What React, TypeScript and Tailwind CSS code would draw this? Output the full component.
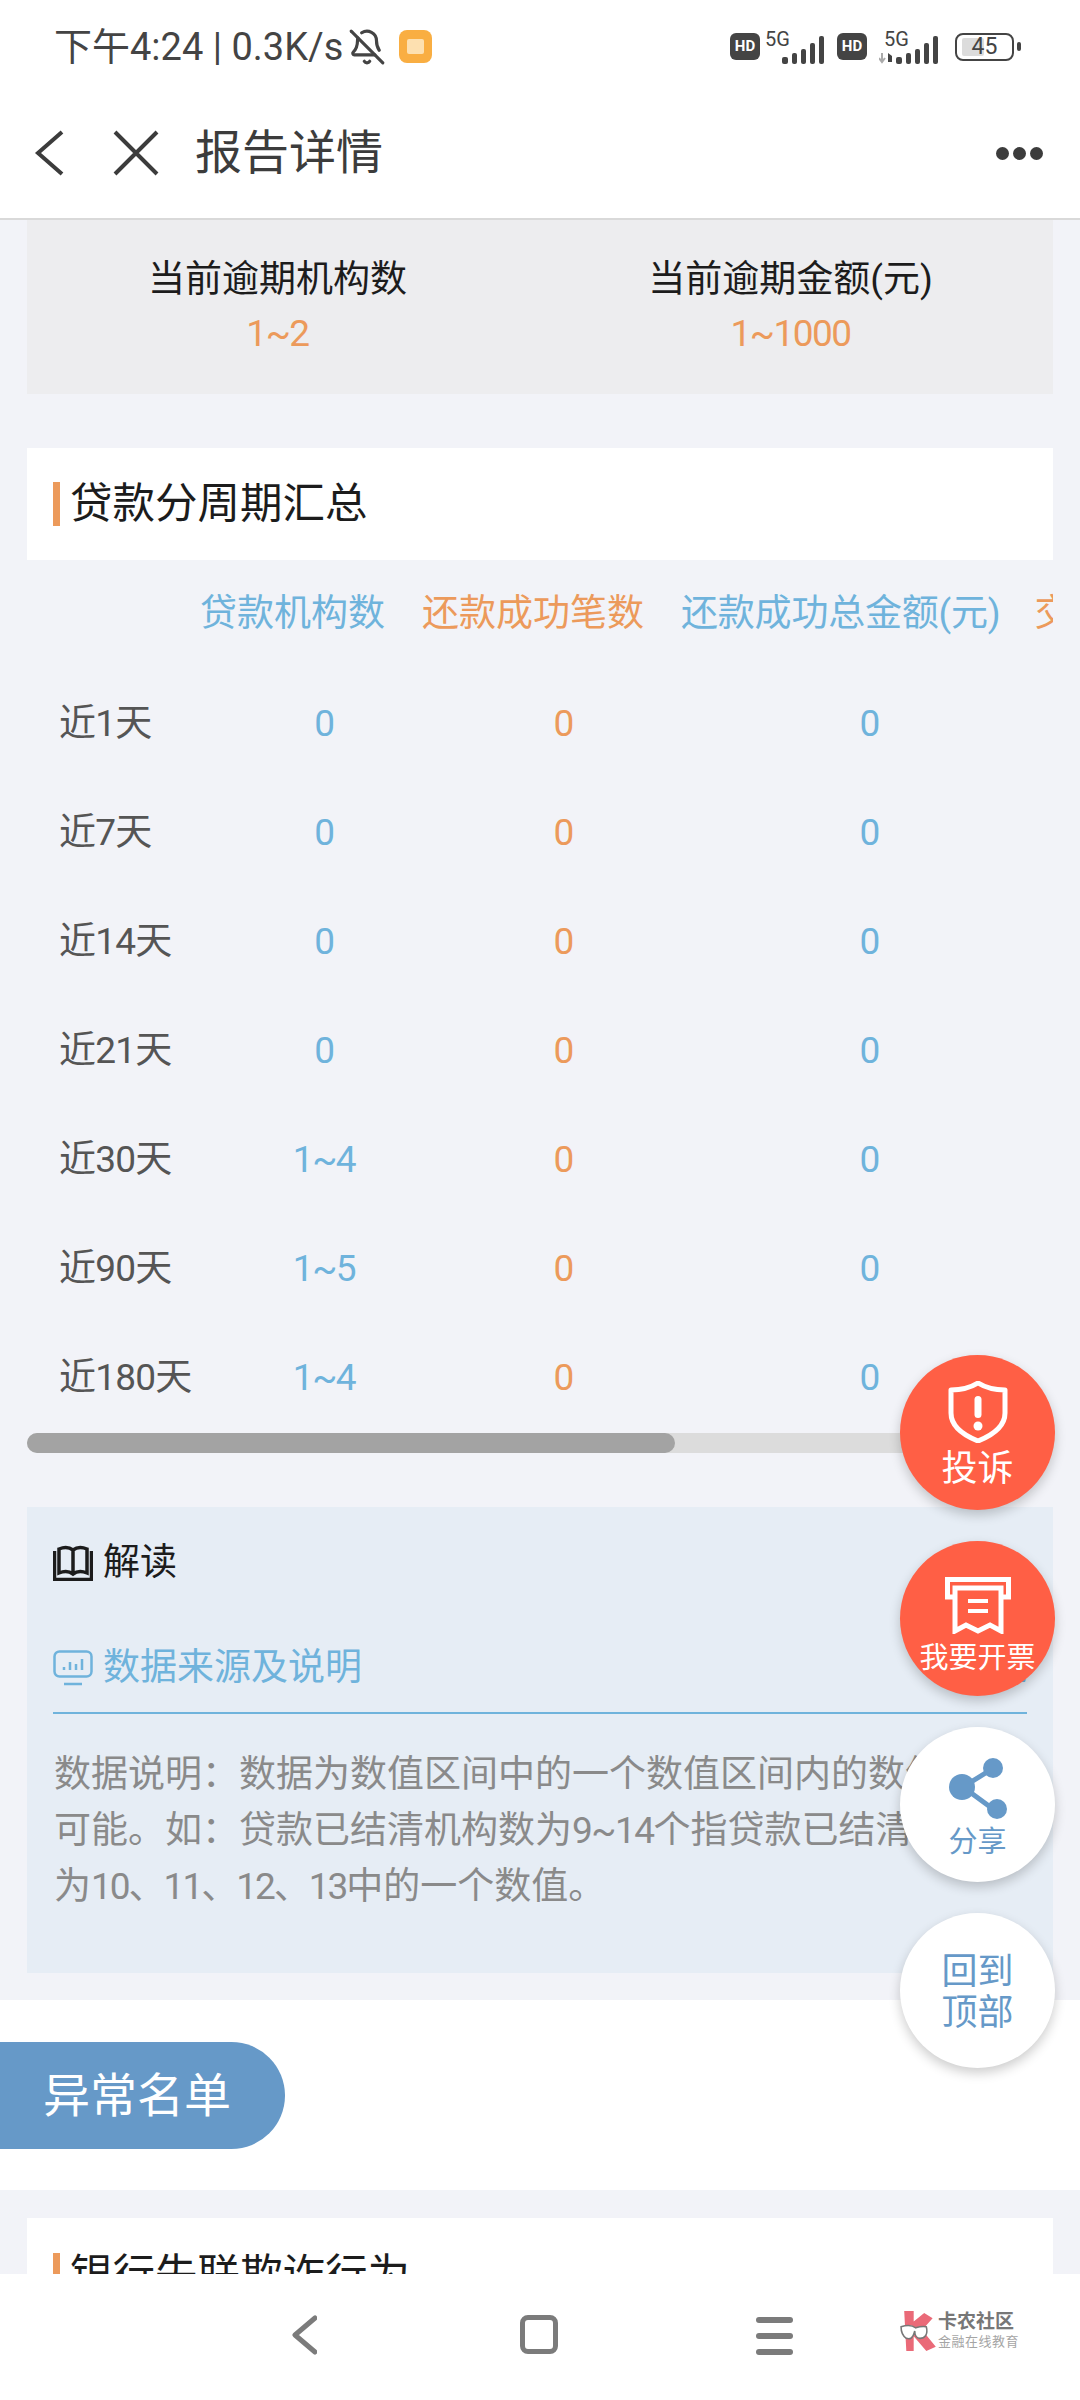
import { BellOff } from "lucide-react";

const rows = [
  ["近1天", "0", "0", "0"],
  ["近7天", "0", "0", "0"],
  ["近14天", "0", "0", "0"],
  ["近21天", "0", "0", "0"],
  ["近30天", "1~4", "0", "0"],
  ["近90天", "1~5", "0", "0"],
  ["近180天", "1~4", "0", "0"],
];

function Signal({ arrows }: { arrows?: boolean }) {
  return (
    <svg width="62" height="44" viewBox="0 -4 62 44" fill="#444">
      {arrows && (
        <>
          <path d="M3 24v8M0 29l3 4 3-4" stroke="#aaa" strokeWidth="2" fill="none" />
          <path d="M9 33v-9l4 3v6z" />
        </>
      )}
      <text x={arrows ? 5 : 0} y="17" fontSize="20" fill="#444" fontFamily="Roboto, sans-serif">
        5G
      </text>
      <rect x="17" y="28" width="6" height="7" rx="2" />
      <rect x="27" y="24" width="5" height="11" rx="2" />
      <rect x="36" y="20" width="5" height="15" rx="2" />
      <rect x="45" y="14" width="5" height="21" rx="2" />
      <rect x="54" y="7" width="5" height="28" rx="2" />
    </svg>
  );
}

function HdBadge() {
  return (
    <span className="flex h-[27px] w-[30px] items-center justify-center rounded-[6px] bg-[#444] text-[15px] font-bold leading-none text-white">
      HD
    </span>
  );
}

function StatusBar() {
  return (
    <div className="flex h-[90px] items-center justify-between pl-[54px] pr-[59px] pt-[3px]">
      <div className="flex items-center text-[#444]">
        <span className="w-[289px] whitespace-nowrap text-[38px] leading-none">
          下午4:24 | 0.3K/s
        </span>
        <BellOff size={38} strokeWidth={2} className="ml-[5px]" />
        <span className="ml-[13px] flex h-[33px] w-[33px] items-center justify-center rounded-[8px] bg-[#f9ae42]">
          <span className="h-[15px] w-[17px] rounded-[2px] bg-[#fde0b0]" />
        </span>
      </div>
      <div className="flex items-center">
        <HdBadge />
        <div className="ml-[5px]">
          <Signal />
        </div>
        <div className="ml-[10px]">
          <HdBadge />
        </div>
        <div className="ml-[12px]">
          <Signal arrows />
        </div>
        <div className="ml-[14px] flex items-center">
          <span className="relative flex h-[28px] w-[59px] items-center justify-center rounded-[8px] border-2 border-[#444] text-[23px] leading-none text-[#444]">
            <span className="absolute bottom-[3px] left-[5px] top-[3px] w-[22px] rounded-[2px] bg-[#dcdcdc]" />
            <span className="relative">45</span>
          </span>
          <span className="ml-[3px] h-[9px] w-[4px] rounded-sm bg-[#444]" />
        </div>
      </div>
    </div>
  );
}

function TitleBar() {
  return (
    <div className="flex h-[130px] items-start justify-between border-b-2 border-[#d9d9d9] bg-white pr-[37px] pt-[40px]">
      <div className="flex items-center pl-[34px]">
        <svg width="30" height="46" viewBox="0 0 30 46" fill="none" stroke="#3c3c3c" strokeWidth="4">
          <path d="M28 2 4 23l24 21" />
        </svg>
        <svg width="46" height="46" viewBox="0 0 46 46" fill="none" stroke="#3c3c3c" strokeWidth="4" className="ml-[49px]">
          <path d="M2 2l42 42M44 2 2 44" />
        </svg>
        <span className="ml-[36px] text-[47px] leading-[46px] text-[#3c3c3c]">报告详情</span>
      </div>
      <div className="mt-[17px] flex gap-[4px]">
        <span className="h-[13px] w-[13px] rounded-full bg-[#3c3c3c]" />
        <span className="h-[13px] w-[13px] rounded-full bg-[#3c3c3c]" />
        <span className="h-[13px] w-[13px] rounded-full bg-[#3c3c3c]" />
      </div>
    </div>
  );
}

function SectionTitle({ title }: { title: string }) {
  return (
    <div className="flex items-center pl-[26px]">
      <span className="h-[44px] w-[7px] bg-[#ec9a5b]" />
      <span className="ml-[10px] text-[42.5px] leading-[44px] text-[#1c1c1c]">{title}</span>
    </div>
  );
}

function Fab({ red, className, children }: { red?: boolean; className: string; children: React.ReactNode }) {
  return (
    <div
      className={`flex h-[155px] w-[155px] flex-col items-center rounded-full shadow-[0_5px_12px_rgba(0,0,0,0.2)] ${
        red ? "bg-[#ff5f45] text-white" : "bg-white text-[#6699c8]"
      } ${className}`}
    >
      {children}
    </div>
  );
}

function FloatingButtons() {
  return (
    <div className="absolute right-[25px] top-[1355px] flex flex-col gap-[31px]">
      <Fab red className="pt-[26px]">
        <svg width="60" height="62" viewBox="0 0 60 62" fill="none">
          <path d="M3 9c10 0 19-2 27-7 8 5 17 7 27 7v23c0 13-12 22-27 28C15 54 3 45 3 32z" stroke="#fff" strokeWidth="5" strokeLinejoin="round" />
          <rect x="26.5" y="15" width="7" height="22" rx="3.5" fill="#fff" />
          <circle cx="30" cy="45" r="4.5" fill="#fff" />
        </svg>
        <span className="mt-[6px] text-[36px] leading-[40px]">投诉</span>
      </Fab>
      <Fab red className="pt-[36px]">
        <svg width="66" height="57" viewBox="0 0 66 57" fill="none" stroke="#fff" strokeWidth="5">
          <path d="M10 20H2.500V2.500h61V20H56" />
          <path d="M10 11h46v43l-11-6-12 6-12-6-11 6z" />
          <path d="M23 24h20M23 34h20" strokeWidth="4" />
        </svg>
        <span className="mt-[8px] whitespace-nowrap text-[29px] leading-[32px]">我要开票</span>
      </Fab>
      <Fab className="pt-[30px]">
        <svg width="60" height="63" viewBox="0 0 60 63" fill="#6699c8">
          <path d="M15 30 44 12M15 30l30 22" stroke="#6699c8" strokeWidth="5" />
          <circle cx="14" cy="30" r="13" />
          <circle cx="45" cy="11" r="10" />
          <circle cx="49" cy="52" r="10" />
        </svg>
        <span className="mt-[6px] text-[29px] leading-[32px]">分享</span>
      </Fab>
      <Fab className="justify-center">
        <span className="w-[74px] pt-[4px] text-center text-[36px] leading-[41px]">回到顶部</span>
      </Fab>
    </div>
  );
}

function BottomNav() {
  return (
    <div className="absolute bottom-0 left-0 right-0 flex h-[126px] items-start bg-white pl-[291px] pt-[41px]">
      <svg width="26" height="40" viewBox="0 0 26 40" fill="none" stroke="#7b7b7b" strokeWidth="5" strokeLinecap="round" strokeLinejoin="round">
        <path d="M24 3 4 20l20 17" />
      </svg>
      <span className="ml-[203px] h-[39px] w-[38px] rounded-[8px] border-[5px] border-[#7b7b7b]" />
      <div className="ml-[198px] mt-[2px] flex w-[37px] flex-col gap-[10px]">
        <span className="h-[6px] rounded-full bg-[#7b7b7b]" />
        <span className="h-[6px] rounded-full bg-[#7b7b7b]" />
        <span className="h-[6px] rounded-full bg-[#7b7b7b]" />
      </div>
      <div className="ml-[107px] mt-[-5px] flex items-center">
        <svg width="40" height="42" viewBox="0 0 38 38">
          <path d="M4 0h9v10l10-8 8 5-10 11 13 16-9 4-12-14v14H6z" fill="#ea6a78" />
          <path d="M1 15c6-2 10-2 14 1 3-1 6-2 10-1 2 8-2 11-6 11-3 0-5-3-5-7-2 8-5 8-8 7-3-2-5-6-5-11z" fill="#fff" stroke="#777" strokeWidth="1.500" />
        </svg>
        <div className="ml-[-2px] flex w-[78px] flex-col items-start">
          <span className="whitespace-nowrap text-[19px] font-bold leading-[22px] text-[#777]">卡农社区</span>
          <span className="whitespace-nowrap text-[13px] leading-[18px] tracking-[0.5px] text-[#a5a5a5]">金融在线教育</span>
        </div>
      </div>
    </div>
  );
}

export default function App() {
  return (
    <div
      lang="zh-CN"
      className="relative h-[2400px] w-[1080px] overflow-hidden bg-[#f2f3f8] font-['Roboto','Noto_Sans_CJK_SC',sans-serif]"
    >
      <div className="bg-white">
        <StatusBar />
        <TitleBar />
      </div>

      {/* current overdue */}
      <div className="mx-[27px] grid h-[174px] grid-cols-[501px_525px] bg-[#ededef] pt-[33px] text-center">
        <div>
          <div className="text-[37px] leading-[54px] text-[#1c1c1c]">当前逾期机构数</div>
          <div className="text-[37px] leading-[54px] tracking-[-1.5px] text-[#ec9a5b]">1~2</div>
        </div>
        <div>
          <div className="text-[37px] leading-[54px] text-[#1c1c1c]">当前逾期金额(元)</div>
          <div className="text-[37px] leading-[54px] tracking-[-1.5px] text-[#ec9a5b]">1~1000</div>
        </div>
      </div>

      <div className="mx-[27px] mt-[54px] flex h-[112px] items-center bg-white">
        <SectionTitle title="贷款分周期汇总" />
      </div>

      {/* period table */}
      <div className="mx-[27px] overflow-hidden">
        <div className="flex h-[108px] items-center gap-[37px] whitespace-nowrap pl-[173px] text-[37px]">
          <span className="text-[#6fb3dc]">贷款机构数</span>
          <span className="text-[#ec9a5b]">还款成功笔数</span>
          <span className="tracking-[-0.2px] text-[#6fb3dc]">还款成功总金额(元)</span>
          <span className="ml-[-3px] text-[#ec9a5b]">交易失败笔数</span>
        </div>
        <div className="pt-[1px]">
          {rows.map((r) => (
            <div key={r[0]} className="grid h-[109px] grid-cols-[177px_240px_240px_372px] items-center text-center text-[37px]">
              <span className="pl-[32px] text-left tracking-[-0.8px] text-[#555]">{r[0]}</span>
              <span className="tracking-[-1.5px] text-[#6fb3dc]">{r[1]}</span>
              <span className="text-[#ec9a5b]">{r[2]}</span>
              <span className="text-[#6fb3dc]">{r[3]}</span>
            </div>
          ))}
        </div>
      </div>

      <div className="mx-[27px] mt-[1px] h-[20px] rounded-full bg-[#dcdcdc]">
        <div className="h-[20px] w-[648px] rounded-full bg-[#a3a3a3]" />
      </div>

      {/* explanation */}
      <div className="mx-[27px] mt-[54px] h-[466px] bg-[#e6edf5] px-[26px] pt-[36px]">
        <div className="flex h-[40px] items-center">
          <svg width="40" height="36" viewBox="0 0 40 36" fill="none" stroke="#1c1c1c" strokeWidth="3.500">
            <path d="M1.500 6v28.500h37V6" />
            <path d="M6 4c5-2 10-2 14 1 4-3 9-3 14-1v24c-5-2-10-2-14 1-4-3-9-3-14-1zM20 5v24" />
          </svg>
          <span className="ml-[10px] text-[37px] leading-[40px] text-[#1c1c1c]">解读</span>
        </div>
        <div className="mt-[61px] flex h-[48px] items-center justify-between">
          <div className="flex items-center">
            <svg width="40" height="36" viewBox="0 0 40 36" fill="none" stroke="#6fb3dc" strokeWidth="2.500">
              <rect x="1.500" y="1.500" width="37" height="25" rx="5" />
              <path d="M11 34h18M11 20v-3M17 20v-8M23 20v-6M29 20V9" />
            </svg>
            <span className="ml-[10px] text-[37px] leading-[40px] text-[#6fb3dc]">数据来源及说明</span>
          </div>
          <span className="text-[37px] leading-[40px] text-[#6fb3dc]">收起</span>
        </div>
        <div className="mt-[20px] h-[2px] bg-[#6fb3dc]" />
        <p className="ml-[1px] mt-[33px] whitespace-nowrap text-[37px] leading-[56px] text-[#8a8a8a]">
          数据说明：数据为数值区间中的一个数值区间内的数值均有
          <br />
          可能。如：贷款已结清机构数为<span className="tracking-[-1.5px]">9~14</span>个指贷款已结清机构数
          <br />
          为<span className="tracking-[-2px]">10、11、12、13</span>中的一个数值。
        </p>
      </div>

      {/* abnormal list */}
      <div className="mt-[27px] flex h-[190px] items-center bg-white">
        <div className="flex h-[107px] w-[285px] items-center rounded-r-[54px] bg-[#6699c8] pl-[43px] text-[47px] leading-none text-white">
          异常名单
        </div>
      </div>

      <div className="mx-[27px] mt-[28px] h-[120px] bg-white pt-[35px]">
        <SectionTitle title="银行失联欺诈行为" />
      </div>

      <FloatingButtons />
      <BottomNav />
    </div>
  );
}
